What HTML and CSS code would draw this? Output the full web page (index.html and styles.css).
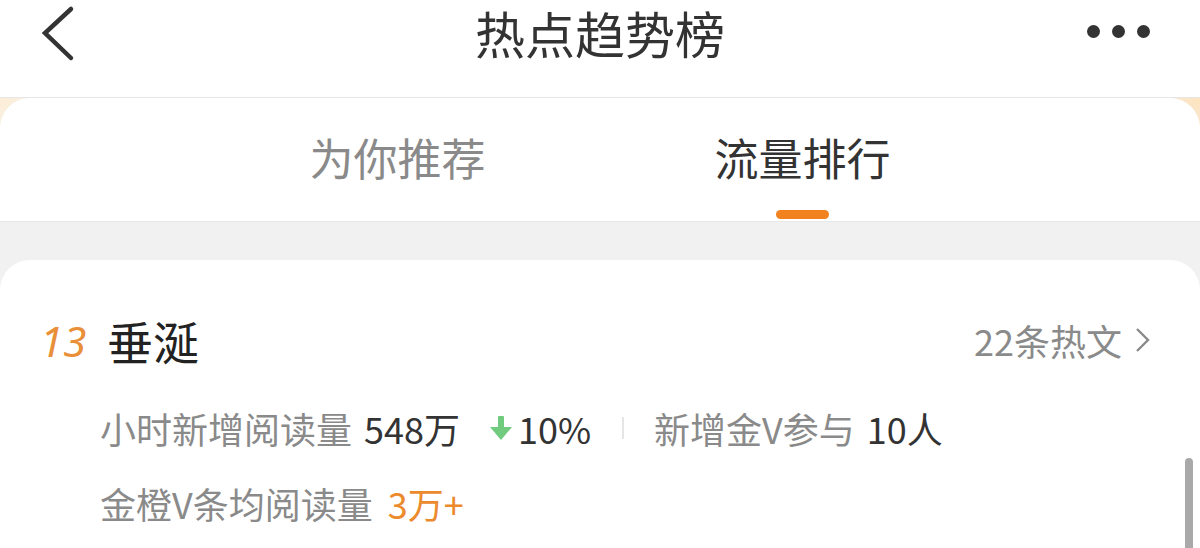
FILE: index.html
```html
<!DOCTYPE html>
<html lang="zh-CN">
<head>
<meta charset="utf-8">
<title>热点趋势榜</title>
<link rel="stylesheet" href="styles.css">
</head>
<body>
<div class="screen">
  <header class="topbar">
    <div class="back">
      <svg width="40" height="60" viewBox="0 0 40 60"><polyline points="31,7 5,31 31,56" fill="none" stroke="#333" stroke-width="4.5" stroke-linecap="round" stroke-linejoin="miter"/></svg>
    </div>
    <h1 class="title">热点趋势榜</h1>
    <div class="more"><span></span><span></span><span></span></div>
  </header>

  <div class="stage">
    <nav class="tabs">
      <div class="tab">
        <span class="tab-label">为你推荐</span>
        <span class="tab-bar"></span>
      </div>
      <div class="tab active">
        <span class="tab-label">流量排行</span>
        <span class="tab-bar"></span>
      </div>
    </nav>
    <div class="gap-band"></div>
    <section class="card">
      <div class="row-head">
        <span class="rank">13</span>
        <span class="topic">垂涎</span>
        <span class="more-link">22条热文
          <svg width="18" height="28" viewBox="0 0 18 28"><polyline points="3,3 14,14 3,25" fill="none" stroke="#8a8a8a" stroke-width="2.4" stroke-linejoin="miter"/></svg>
        </span>
      </div>
      <div class="stat-line">
        <span class="label">小时新增阅读量</span>
        <span class="value">548万</span>
        <span class="trend">
          <svg class="arrow" width="22" height="26" viewBox="0 0 22 26"><rect x="8" y="1" width="6" height="13" rx="1" fill="#70cb7f"/><polygon points="0,12 22,12 11,25" fill="#70cb7f"/></svg>
          <span class="value">10%</span>
        </span>
        <span class="divider"></span>
        <span class="label">新增金V参与</span>
        <span class="value">10人</span>
      </div>
      <div class="stat-line second">
        <span class="label">金橙V条均阅读量</span>
        <span class="value orange">3万+</span>
      </div>
      <div class="scrollbar"></div>
    </section>
  </div>
</div>
</body>
</html>
```

FILE: styles.css
```css
* { box-sizing: border-box; margin: 0; padding: 0; }

html, body {
  width: 1200px;
  height: 548px;
  overflow: hidden;
  background: #ffffff;
  font-family: "Noto Sans CJK SC", "Noto Sans", sans-serif;
}

.screen {
  width: 1200px;
  height: 548px;
  display: flex;
  flex-direction: column;
}

.topbar {
  height: 98px;
  flex: none;
  display: grid;
  grid-template-columns: 1fr auto 1fr;
  align-items: start;
  border-bottom: 1px solid #e6e6e6;
  background: #fff;
}

.back {
  padding: 2px 0 0 40px;
}

.back svg { display: block; }

.title {
  font-size: 50px;
  font-weight: 400;
  line-height: 64px;
  color: #333;
  white-space: nowrap;
}

.more {
  justify-self: end;
  display: flex;
  gap: 12px;
  padding: 25px 50px 0 0;
}

.more span {
  width: 13px;
  height: 13px;
  border-radius: 50%;
  background: #333;
}

.stage {
  flex: 1;
  position: relative;
  display: flex;
  flex-direction: column;
  background:
    radial-gradient(circle at 0 0, #fdeed6 0, rgba(253,238,214,0) 60px),
    radial-gradient(circle at 100% 0, #fde3bd 0, rgba(253,227,189,0) 70px),
    #f1f1f1;
}

.tabs {
  height: 124px;
  flex: none;
  display: flex;
  justify-content: center;
  gap: 229px;
  background: #fff;
  border-radius: 30px 30px 0 0;
  border-bottom: 1px solid #e8e8e8;
  padding-top: 37px;
}

.tab {
  display: flex;
  flex-direction: column;
  align-items: center;
}

.tab-label {
  font-size: 44px;
  line-height: 44px;
  color: #8a8a8a;
}

.tab.active .tab-label { color: #333; }

.tab-bar {
  margin-top: 31px;
  width: 53px;
  height: 9px;
  border-radius: 5px;
  background: #f28120;
  visibility: hidden;
}

.tab.active .tab-bar { visibility: visible; }

.gap-band {
  height: 38px;
  flex: none;
  background: #f1f1f1;
}

.card {
  flex: 1;
  position: relative;
  background: #fff;
  border-radius: 30px 30px 0 0;
  padding: 50px 48px 0 40px;
}

.row-head {
  display: flex;
  align-items: center;
  height: 60px;
}

.rank {
  font-size: 42px;
  font-style: italic;
  color: #e98f3a;
  width: 67px;
  font-family: "Noto Sans", "Noto Sans CJK SC", sans-serif;
  font-weight: 400;
}

.topic {
  font-size: 46px;
  color: #222;
  line-height: 60px;
}

.more-link {
  margin-left: auto;
  display: flex;
  align-items: center;
  gap: 12px;
  font-size: 36px;
  color: #8a8a8a;
}

.more-link svg { display: block; }

.stat-line {
  display: flex;
  align-items: center;
  height: 50px;
  margin-top: 33px;
  padding-left: 60px;
  font-size: 36px;
  line-height: 50px;
}

.stat-line.second { margin-top: 25px; }

.label { color: #8a8a8a; margin-right: 12px; }

.value { color: #333; }

.value.orange { color: #ec8a2e; margin-left: 3px; }

.trend {
  display: flex;
  align-items: center;
  gap: 6px;
  margin-left: 30px;
}

.trend .arrow { display: block; flex: none; }

.divider {
  width: 2px;
  height: 22px;
  background: #e6e6e6;
  margin: 0 30px 0 31px;
}

.scrollbar {
  position: absolute;
  right: 7px;
  top: 198px;
  width: 8px;
  height: 100px;
  border-radius: 4px;
  background: #a9a9a9;
}
```
